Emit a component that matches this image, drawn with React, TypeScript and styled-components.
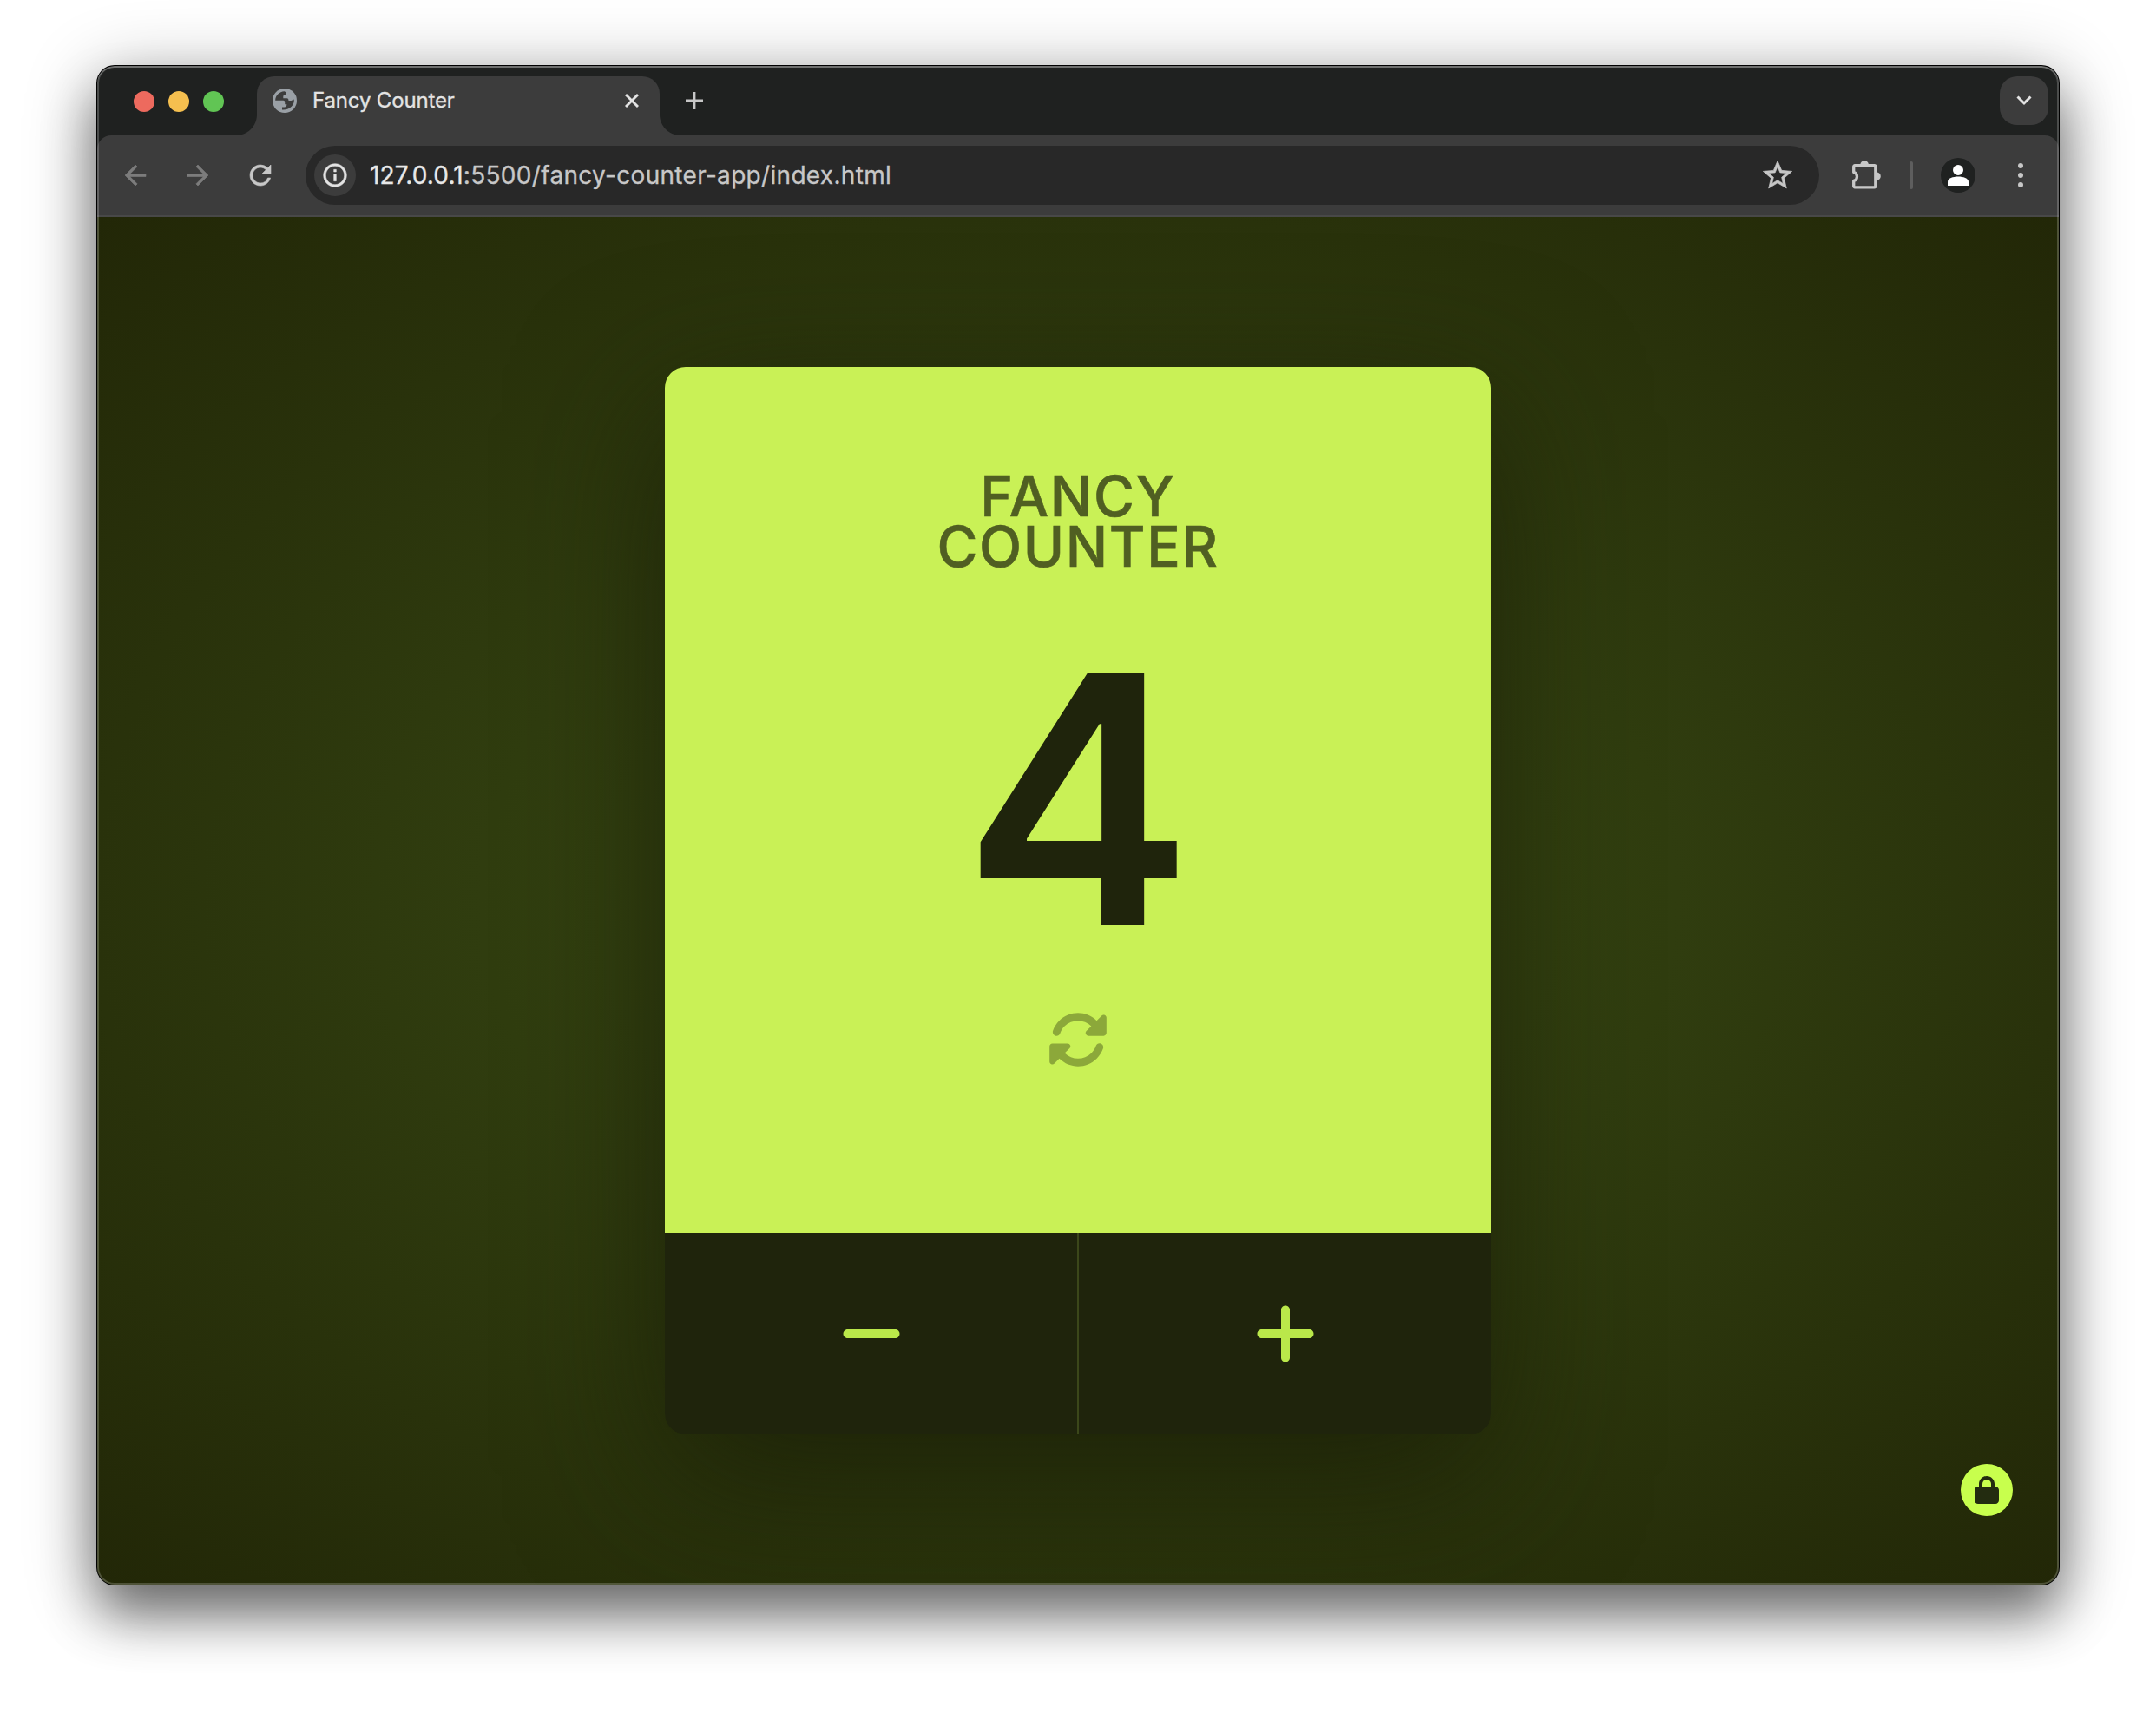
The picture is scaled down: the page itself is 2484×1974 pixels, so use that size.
import React, { useState } from 'react';
import styled, { createGlobalStyle } from 'styled-components';
import { FaLock, FaMinus, FaPlus, FaRotate } from 'react-icons/fa6';
import { MdArrowBack, MdArrowForward, MdInfoOutline, MdRefresh, MdStarBorder } from 'react-icons/md';

const GlobalStyle = createGlobalStyle`
  *, *::before, *::after { box-sizing: border-box; }
  body { margin: 0; background: #fff; font-family: Inter, "Liberation Sans", sans-serif; overflow: hidden; }
  button { border: 0; padding: 0; background: none; font: inherit; color: inherit; }
  svg { display: block; flex: none; }
`;

const Desktop = styled.main`
  height: 1974px;
  padding: 76px 112px 148px;
`;

const Window = styled.section`
  position: relative;
  display: flex;
  flex-direction: column;
  width: 2260px;
  height: 1750px;
  border-radius: 20px;
  overflow: hidden;
  background: #1f2120;
  box-shadow: 0 0 0 1px #000, 0 36px 60px rgba(0, 0, 0, 0.46), 0 12px 84px rgba(0, 0, 0, 0.32);

  &::after {
    content: '';
    position: absolute;
    inset: 0;
    border-radius: inherit;
    box-shadow: inset 0 0 0 2px rgba(255, 255, 255, 0.2), inset 0 2px 0 rgba(255, 255, 255, 0.2);
    pointer-events: none;
  }
`;

const TabStrip = styled.header`
  display: flex;
  height: 80px;
  flex: none;
  padding: 12px 12px 0 42px;
`;

const Lights = styled.div`
  display: flex;
  gap: 16px;
  padding-top: 17px;
  width: 142px;
`;

const Light = styled.i<{ $color: string }>`
  width: 24px;
  height: 24px;
  border-radius: 50%;
  background: ${(p) => p.$color};
`;

const Tab = styled.div`
  position: relative;
  display: flex;
  align-items: center;
  width: 464px;
  height: 68px;
  padding: 0 24px 12px 18px;
  border-radius: 20px 20px 0 0;
  background: #3c3c3c;
  color: #e3e3e3;

  &::before,
  &::after {
    content: '';
    position: absolute;
    bottom: 0;
    width: 24px;
    height: 24px;
  }
  &::before {
    right: 100%;
    background: radial-gradient(circle at 0 0, transparent 23.5px, #3c3c3c 24.5px);
  }
  &::after {
    left: 100%;
    background: radial-gradient(circle at 100% 0, transparent 23.5px, #3c3c3c 24.5px);
  }
`;

const TabTitle = styled.span`
  flex: 1;
  margin-left: 18px;
  font-size: 24px;
  line-height: 32px;
  letter-spacing: -0.15px;
  -webkit-text-stroke: 0.3px currentColor;
  white-space: nowrap;
`;

const NewTab = styled.button`
  display: grid;
  place-items: center;
  width: 56px;
  height: 56px;
  margin-left: 12px;
  color: #c7c7c7;
`;

const TabSearch = styled.button`
  display: grid;
  place-items: center;
  width: 56px;
  height: 56px;
  margin-left: auto;
  border-radius: 20px;
  background: #3c3c3c;
  color: #e3e3e3;
`;

const Toolbar = styled.nav`
  display: flex;
  align-items: center;
  height: 94px;
  flex: none;
  padding: 0 28px 0 26px;
  border-bottom: 2px solid #484848;
  border-radius: 16px 16px 0 0;
  background: #3c3c3c;
  color: #c7c7c7;
`;

const NavButton = styled.button<{ $dim?: boolean; $gap: number }>`
  display: grid;
  place-items: center;
  width: 36px;
  height: 36px;
  margin-right: ${(p) => p.$gap}px;
  color: ${(p) => (p.$dim ? '#7c7c7c' : '#c7c7c7')};

  path:not([fill='none']) {
    stroke: currentColor;
    stroke-width: 0.4px;
  }
`;

const AddressBar = styled.div`
  display: flex;
  align-items: center;
  width: 1744px;
  height: 68px;
  padding: 0 28px 0 10px;
  border-radius: 34px;
  background: #282828;

  path:not([fill='none']) {
    stroke: currentColor;
    stroke-width: 0.4px;
  }
`;

const SiteInfo = styled.span`
  display: grid;
  place-items: center;
  width: 48px;
  height: 48px;
  border-radius: 50%;
  background: #3c3c3c;
  color: #e3e3e3;
`;

const Url = styled.span`
  flex: 1;
  margin-left: 16px;
  font-size: 28px;
  line-height: 36px;
  letter-spacing: 0.31px;
  -webkit-text-stroke: 0.3px currentColor;
  white-space: nowrap;
  color: #c7c7c7;
`;

const Host = styled.span`
  letter-spacing: 0.15px;
  color: #e8e8e8;
`;

const Actions = styled.div`
  display: flex;
  align-items: center;
  flex: 1;
  padding-left: 37px;
`;

const Divider = styled.i`
  width: 4px;
  height: 32px;
  margin: 0 32px 0 33px;
  border-radius: 2px;
  background: #5e5e5e;
`;

const Avatar = styled.span`
  display: grid;
  place-items: center;
  width: 40px;
  height: 40px;
  border-radius: 50%;
  background: #1f2120;
`;

const Dots = styled.span`
  display: flex;
  flex-direction: column;
  gap: 5px;
  margin-left: 49px;
`;

const Dot = styled.i`
  width: 6px;
  height: 6px;
  border-radius: 50%;
  background: #c7c7c7;
`;

const Page = styled.div`
  position: relative;
  display: flex;
  justify-content: center;
  align-items: center;
  flex: 1;
  background: radial-gradient(ellipse farthest-corner at center, #3a4c13 0%, #303d0f 43%, #29320b 71%, #222707 100%);
`;

const Card = styled.article`
  display: flex;
  flex-direction: column;
  width: 952px;
  height: 1230px;
  border-radius: 24px;
  overflow: hidden;
  box-shadow: 0 50px 170px rgba(24, 28, 7, 0.78);
`;

const CardBody = styled.div`
  display: flex;
  flex-direction: column;
  align-items: center;
  flex: 1;
  padding-top: 120px;
  background: #c9f156;
`;

const Title = styled.h1`
  margin: 0;
  width: 400px;
  text-align: center;
  font-size: 64px;
  font-weight: 500;
  line-height: 57.6px;
  letter-spacing: 1.65px;
  text-transform: uppercase;
  -webkit-text-stroke: 0.6px currentColor;
  color: #505f22;
`;

const Value = styled.p`
  margin: 62px 0 0;
  font-size: 400px;
  font-weight: 600;
  line-height: 400px;
  color: #1f240c;
`;

const Reset = styled.button`
  margin-top: 43px;
  color: #8ca83a;
`;

const Controls = styled.div`
  display: flex;
  height: 232px;
  background: #1f240c;
`;

const Control = styled.button`
  display: grid;
  place-items: center;
  flex: 1;
  padding-bottom: 1px;
  color: #bae84a;

  & + & {
    border-left: 2px solid #3b471a;
  }
`;

const LockBadge = styled.span`
  position: absolute;
  right: 53px;
  bottom: 79px;
  display: grid;
  place-items: center;
  width: 60px;
  height: 60px;
  border-radius: 50%;
  background: #c8ff4d;
  color: #232c10;
`;

const GlobeIcon = () => (
  <svg width="28" height="28" viewBox="0 0 28 28">
    <circle cx="14" cy="14" r="14" fill="#9aa0a6" />
    <path
      d="M3.200 13.800C3.200 8 7.800 3.400 13.600 3.200L15.800 4.400V6.300L12.300 8.600V11.200H16.500C18 11.200 18.500 12.300 18.500 14H21.500L24.700 12.500C25.500 19 20 25.200 11 24.500V21.500H13.500C15.500 21.500 16.400 20 16.400 18.200H14.200V15.500C14.200 14.500 13.500 13.800 12.500 13.800Z"
      fill="#3c3c3c"
    />
  </svg>
);

const ExtensionIcon = () => (
  <svg width="34" height="34" viewBox="0 0 34 34" fill="none">
    <path
      d="M4 5.700h22.500a1.300 1.300 0 0 1 1.300 1.300v22.500a1.300 1.300 0 0 1-1.300 1.300H4a1.300 1.300 0 0 1-1.300-1.300V23.400a5.200 5.200 0 0 0 0-10V7A1.300 1.300 0 0 1 4 5.700Z"
      stroke="currentColor"
      strokeWidth="3.300"
      strokeLinejoin="round"
    />
    <path d="M10.300 5a4.800 4.800 0 0 1 9.600 0ZM29 13.400a4.800 4.800 0 0 1 0 9.600Z" fill="currentColor" />
  </svg>
);

export default function App() {
  const [count, setCount] = useState(4);

  return (
    <>
      <GlobalStyle />
      <Desktop>
        <Window>
          <TabStrip>
            <Lights>
              <Light $color="#ed6a5e" />
              <Light $color="#f5bf4f" />
              <Light $color="#61c554" />
            </Lights>
            <Tab>
              <GlobeIcon />
              <TabTitle>Fancy Counter</TabTitle>
              <svg width="16" height="16" viewBox="0 0 16 16" stroke="currentColor" strokeWidth="2.900">
                <path d="M1 1l14 14M15 1L1 15" />
              </svg>
            </Tab>
            <NewTab>
              <svg width="20" height="20" viewBox="0 0 20 20" stroke="currentColor" strokeWidth="2.800">
                <path d="M10 0v20M0 10h20" />
              </svg>
            </NewTab>
            <TabSearch>
              <svg width="18" height="12" viewBox="0 0 18 12" fill="none" stroke="currentColor" strokeWidth="3">
                <path d="M1.500 1.500L9 9l7.500-7.500" />
              </svg>
            </TabSearch>
          </TabStrip>
          <Toolbar>
            <NavButton $dim $gap={36}>
              <MdArrowBack size={36} />
            </NavButton>
            <NavButton $dim $gap={36}>
              <MdArrowForward size={36} />
            </NavButton>
            <NavButton $gap={34}>
              <MdRefresh size={36} />
            </NavButton>
            <AddressBar>
              <SiteInfo>
                <MdInfoOutline size={32} />
              </SiteInfo>
              <Url>
                <Host>127.0.0.1</Host>:5500/fancy-counter-app/index.html
              </Url>
              <MdStarBorder size={40} />
            </AddressBar>
            <Actions>
              <ExtensionIcon />
              <Divider />
              <Avatar>
                <svg width="24" height="24" viewBox="0 0 24 24" fill="#fff">
                  <circle cx="12" cy="6" r="6" />
                  <path d="M0 24v-4.500C0 15.500 6 13.500 12 13.500s12 2 12 6V24Z" />
                </svg>
              </Avatar>
              <Dots>
                <Dot />
                <Dot />
                <Dot />
              </Dots>
            </Actions>
          </Toolbar>
          <Page>
            <Card>
              <CardBody>
                <Title>Fancy Counter</Title>
                <Value>{count}</Value>
                <Reset aria-label="Reset" onClick={() => setCount(0)}>
                  <FaRotate size={70} />
                </Reset>
              </CardBody>
              <Controls>
                <Control aria-label="Decrease" onClick={() => setCount(Math.max(0, count - 1))}>
                  <FaMinus size={80} />
                </Control>
                <Control aria-label="Increase" onClick={() => setCount(count + 1)}>
                  <FaPlus size={80} />
                </Control>
              </Controls>
            </Card>
            <LockBadge>
              <FaLock size={32} />
            </LockBadge>
          </Page>
        </Window>
      </Desktop>
    </>
  );
}
